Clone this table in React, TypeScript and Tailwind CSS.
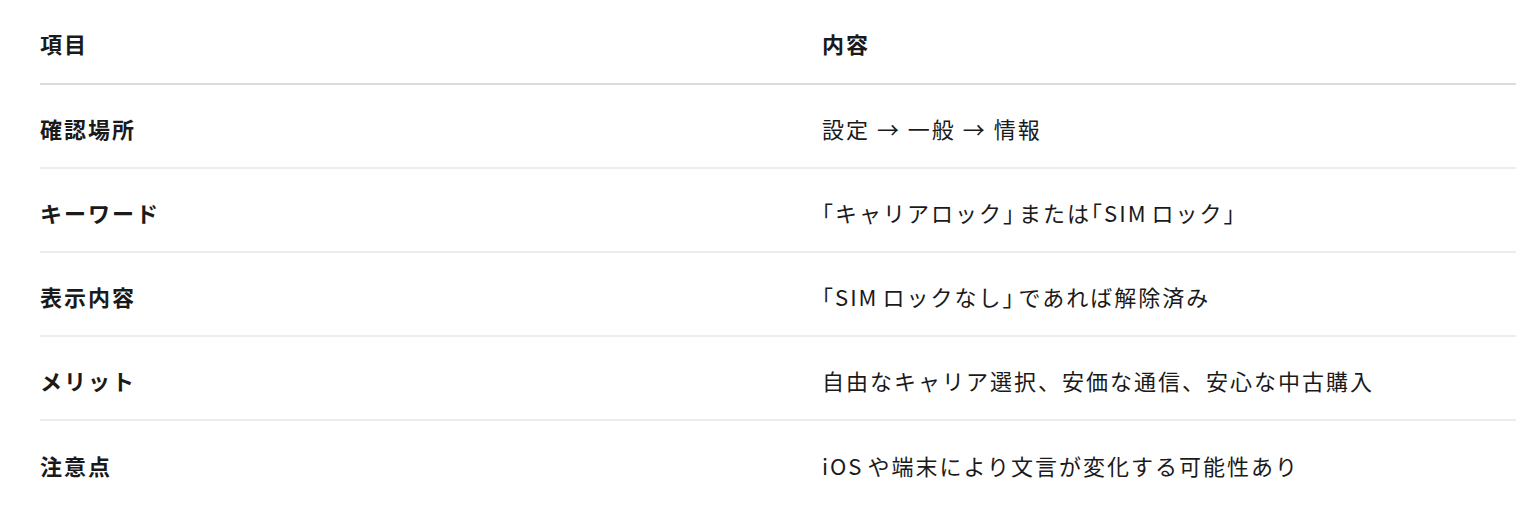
import React from "react";

const B = ({ c }: { c: string }) => (
  <span className="[font-feature-settings:'halt']">{c}</span>
);

const L = ({ c }: { c: string }) => <span className="mr-[4px]">{c}</span>;

const rows: [string, React.ReactNode][] = [
  ["確認場所", "設定 → 一般 → 情報"],
  [
    "キーワード",
    <>
      <B c="「" />キャリアロック<B c="」" />
      <span className="ml-[3px]">または</span>
      <B c="「" />
      <L c="SIM" />ロック<B c="」" />
    </>,
  ],
  [
    "表示内容",
    <>
      <B c="「" />
      <L c="SIM" />ロックなし<B c="」" />
      <span className="ml-[3px]">であれば解除済み</span>
    </>,
  ],
  ["メリット", "自由なキャリア選択、安価な通信、安心な中古購入"],
  [
    "注意点",
    <>
      <L c="iOS" />や端末により文言が変化する可能性あり
    </>,
  ],
];

export default function App() {
  return (
    <div
      className="w-[1516px] h-[532px] bg-white overflow-hidden pl-10 text-[#1a1a1a]"
      style={{ fontFamily: '"Noto Sans CJK JP", "Noto Sans", sans-serif' }}
    >
      <div className="grid grid-cols-[782px_1fr] h-[85px] items-center border-b-2 border-[#dcdcdc] text-[22px] font-semibold tracking-[2px]">
        <div className="pt-1">項目</div>
        <div className="pt-1">内容</div>
      </div>
      {rows.map(([k, v], i) => (
        <div
          key={k}
          className={
            "grid grid-cols-[782px_1fr] h-[84px] items-center text-[22px] tracking-[2px] " +
            (i < rows.length - 1 ? "border-b-2 border-[#ececec]" : "")
          }
        >
          <div className="pt-1 font-semibold">{k}</div>
          <div className="pt-1">{v}</div>
        </div>
      ))}
    </div>
  );
}
